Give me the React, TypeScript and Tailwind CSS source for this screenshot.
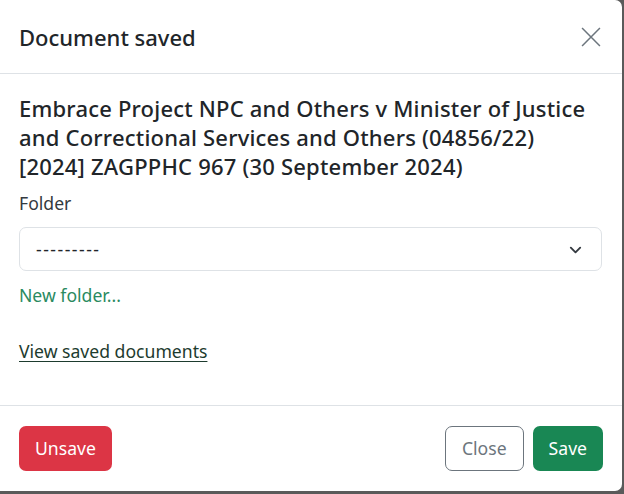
export default function App() {
  return (
    <div className="w-[624px] h-[494px] bg-[#5a5a5a] overflow-hidden" style={{ fontFamily: '"Noto Sans", "Open Sans", sans-serif' }}>
      <div className="w-[622px] h-[491px] bg-white rounded-tr-[7px] rounded-br-[7px] flex flex-col text-[#212529]">
        {/* header */}
        <div className="h-[74px] shrink-0 flex items-center justify-between pl-[19px] pr-[20px] border-b border-[#dee2e6]">
          <h5 className="text-[22px] font-medium leading-none">Document saved</h5>
          <button className="w-[22px] h-[22px] flex items-center justify-center text-[#6c757d]">
            <svg viewBox="0 0 16 16" className="w-[22px] h-[22px]" fill="none" stroke="currentColor" strokeWidth={1.1}>
              <path d="M1.5 1.5l13 13M14.5 1.5l-13 13" />
            </svg>
          </button>
        </div>

        {/* body */}
        <div className="flex-1 px-[19px] pt-[20px]">
          <h5 className="text-[22px] font-medium leading-[29px] tracking-[0.2px]">
            Embrace Project NPC and Others v Minister of Justice and Correctional Services and Others (04856/22) [2024] ZAGPPHC 967 (30 September 2024)
          </h5>
          <label className="block mt-[9px] text-[17.6px] leading-[26px] text-[#343a40]">Folder</label>
          <div className="mt-[11px] h-[44px] w-[583px] border border-[#dee2e6] rounded-[7px] flex items-center justify-between pl-[16px] pr-[18px]">
            <span className="text-[17.6px] tracking-[1.5px] text-[#212529]">---------</span>
            <svg viewBox="0 0 16 16" className="w-[15px] h-[15px]" fill="none" stroke="#343a40" strokeWidth={2} strokeLinecap="round" strokeLinejoin="round">
              <path d="M3 6l5 5 5-5" />
            </svg>
          </div>
          <a className="block mt-[11px] text-[17.6px] leading-[26px] text-[#2a8a5f]">New folder...</a>
          <a className="inline-block mt-[30px] text-[17.6px] leading-[26px] text-[#1d3b2e] underline underline-offset-[3px]">View saved documents</a>
        </div>

        {/* footer */}
        <div className="h-[86px] shrink-0 border-t border-[#dee2e6] flex items-center justify-between px-[19px] pb-[1px]">
          <button className="h-[45px] px-[16px] rounded-[7px] bg-[#dc3545] text-white text-[17.6px]">Unsave</button>
          <div className="flex gap-[9px]">
            <button className="h-[45px] px-[16px] rounded-[7px] border border-[#6c757d] text-[#6c757d] text-[17.6px]">Close</button>
            <button className="h-[45px] px-[16px] rounded-[7px] bg-[#198754] text-white text-[17.6px]">Save</button>
          </div>
        </div>
      </div>
    </div>
  );
}
